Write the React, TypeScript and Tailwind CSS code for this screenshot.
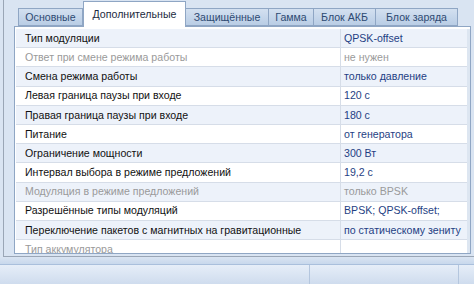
const tabs = [
  { t: 'Основные', w: 'w-[65px]' },
  { t: 'Дополнительные', w: 'w-[103px]' },
  { t: 'Защищённые', w: 'w-[83px]' },
  { t: 'Гамма', w: 'w-[45px]' },
  { t: 'Блок АКБ', w: 'w-[62px]' },
  { t: 'Блок заряда', w: 'w-[82px]' },
]

type Row = { label: string; value: string; disabled?: boolean }

const rows: Row[] = [
  { label: 'Тип модуляции', value: 'QPSK-offset' },
  { label: 'Ответ при смене режима работы', value: 'не нужен', disabled: true },
  { label: 'Смена режима работы', value: 'только давление' },
  { label: 'Левая граница паузы при входе', value: '120 с' },
  { label: 'Правая граница паузы при входе', value: '180 с' },
  { label: 'Питание', value: 'от генератора' },
  { label: 'Ограничение мощности', value: '300 Вт' },
  { label: 'Интервал выбора в режиме предложений', value: '19,2 с' },
  { label: 'Модуляция в режиме предложений', value: 'только BPSK', disabled: true },
  { label: 'Разрешённые типы модуляций', value: 'BPSK; QPSK-offset;' },
  { label: 'Переключение пакетов с магнитных на гравитационные', value: 'по статическому зениту' },
  { label: 'Тип аккумулятора', value: '', disabled: true },
]

export default function App() {
  return (
    <div
      className="w-[474px] h-[284px] overflow-hidden bg-[#d9e4f2] flex flex-col text-[10.6px] leading-none"
      style={{ fontFamily: '"Liberation Sans", Arial, sans-serif' }}
    >
      {/* верхняя часть с вкладками */}
      <div className="h-[257px] ml-[3px] border-l border-b border-[#9aa6b6] pl-[10px] pr-[3px] pb-[2px] flex flex-col">
        <div className="h-[26px] flex items-end pl-[4px]">
          {tabs.map((tab, i) =>
            i === 1 ? (
              <div
                key={tab.t}
                className={`${tab.w} h-[26px] flex items-center justify-center whitespace-nowrap bg-white border border-b-0 border-[#8fa6c4] text-[#1c2a3e] -mb-px relative z-10`}
              >
                {tab.t}
              </div>
            ) : (
              <div
                key={tab.t}
                className={`${tab.w} h-[18px] flex items-center justify-center whitespace-nowrap bg-gradient-to-b from-[#d3e0f0] to-[#b9cde5] border border-[#8fa6c4] border-l-0 first:border-l text-[#2e4a72]`}
              >
                {tab.t}
              </div>
            )
          )}
        </div>
        <div className="flex-1 bg-white border border-[#8fa6c4] pt-[2px] pl-px overflow-hidden">
          <div className="border-r-[3px] border-[#dde6f1] h-full overflow-hidden">
            {rows.map((r, i) => (
              <div
                key={i}
                className={`flex h-[19.2px] border-b border-[#d6dde8] ${i % 2 === 0 ? 'bg-[#edf2fa]' : 'bg-white'}`}
              >
                <div
                  className={`w-[324px] pl-[9px] flex items-center whitespace-nowrap overflow-hidden ${r.disabled ? 'text-[#9a9a9a]' : 'text-[#111]'}`}
                >
                  {r.label}
                </div>
                <div
                  className={`flex-1 pl-[3px] border-l border-[#d6dde8] flex items-center whitespace-nowrap overflow-hidden ${r.disabled ? 'text-[#9a9a9a]' : 'text-[#1f3f84]'}`}
                >
                  {r.value}
                </div>
              </div>
            ))}
          </div>
        </div>
      </div>
      {/* нижняя полоса */}
      <div className="h-[8px] bg-gradient-to-b from-[#d9e4f2] to-[#c8d8ec] border-b border-[#a9bfdc]" />
      <div className="flex-1 flex bg-gradient-to-b from-[#e6eef8] to-[#cfdcee]">
        <div className="w-[310px] border-r border-[#b4c6de]" />
        <div className="w-[149px] border-r border-[#b4c6de]" />
        <div className="flex-1" />
      </div>
    </div>
  )
}
